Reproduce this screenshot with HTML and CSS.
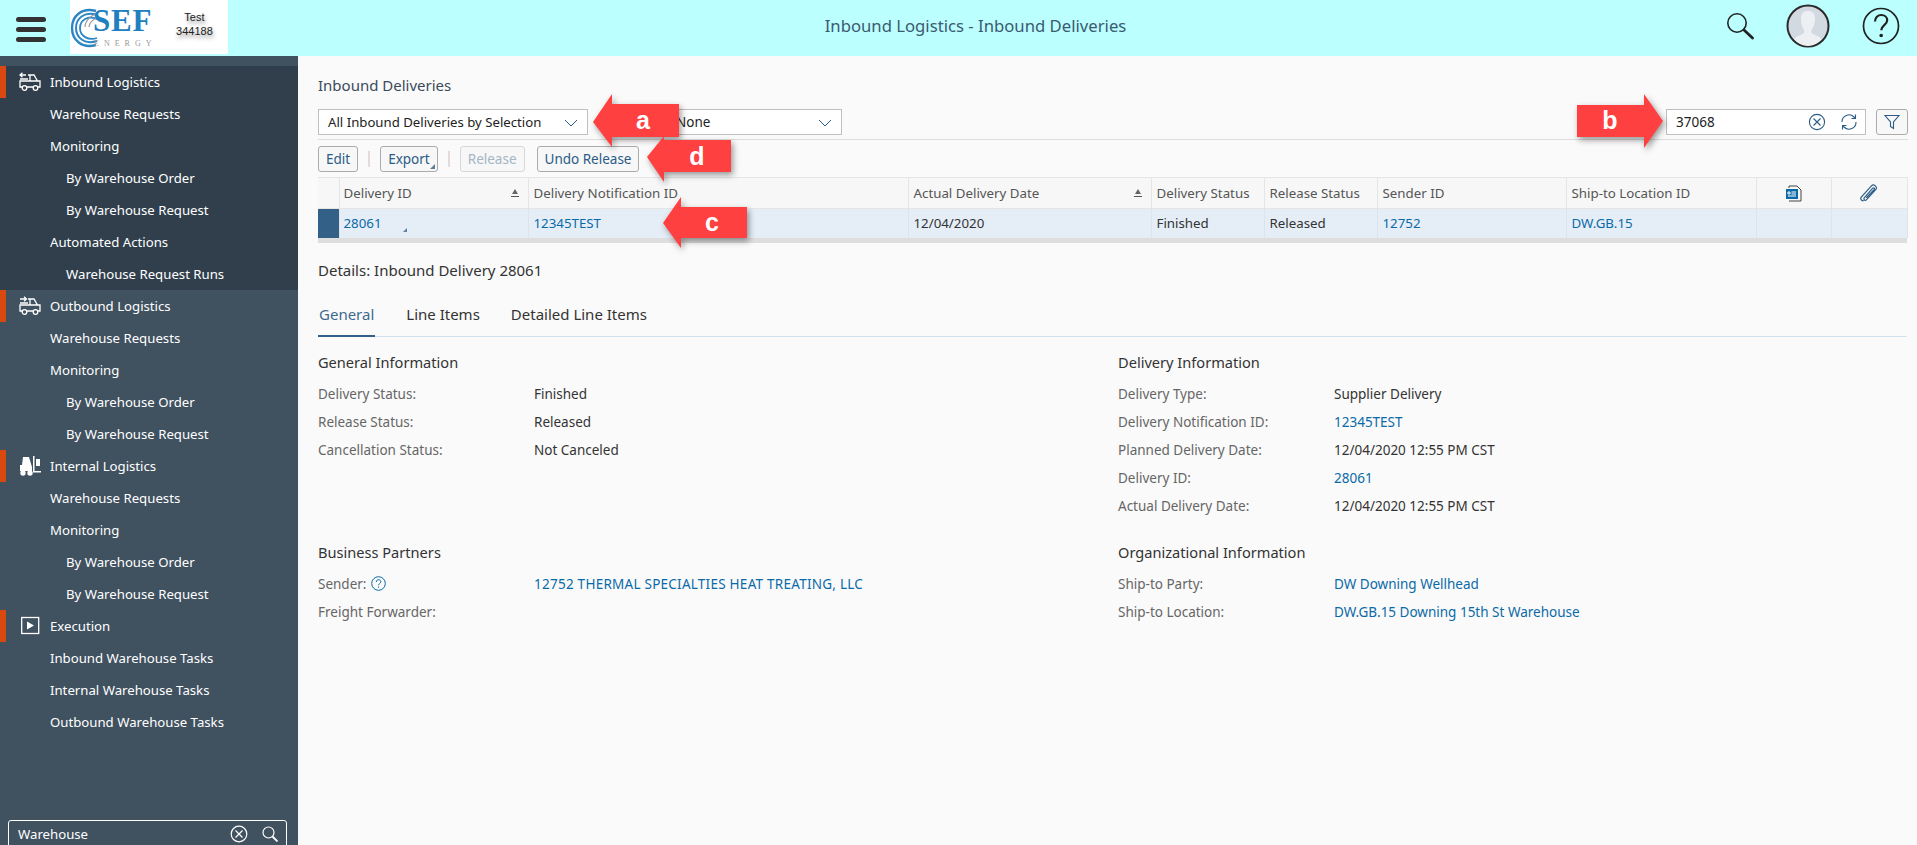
FILE: index.html
```html
<!DOCTYPE html>
<html>
<head>
    <title>Inbound Logistics - Inbound Deliveries</title>
    <link rel="stylesheet" href="styles.css">
</head>
<body>
    <header class="top-bar">
        <div class="hamburger"><span></span><span></span><span></span></div>
        <div class="brand">
            <svg class="swirl" width="30" height="42" viewBox="0 0 30 42" fill="none" stroke="#2a86c4">
                <path d="M26 4C12 0 2 9 2 21s10 21 24 17" stroke-width="2.4"/>
                <path d="M27 8C15 4 6 11 6 21s9 17 21 13" stroke-width="2"/>
                <path d="M27 12C18 8 10 13 10 21s8 13 17 10" stroke-width="1.8"/>
                <path d="M28 6C22 8 15 13 15 20" stroke="#999" stroke-width="1.2"/>
                <path d="M28 10C24 12 19 15 19 20" stroke="#999" stroke-width="1.2"/>
            </svg>
            <div class="brand-name">
                <span class="brand-sef">SEF</span>
                <span class="brand-energy">ENERGY</span>
            </div>
            <div class="brand-user">Test<br>344188</div>
        </div>
        <div class="page-title">Inbound Logistics - Inbound Deliveries</div>
        <div class="top-icons">
            <svg width="28" height="28" viewBox="0 0 28 28" fill="none" stroke="#222">
                <circle cx="11" cy="11" r="9.2" stroke-width="1.6"/>
                <path d="M18 18l8.5 8" stroke-width="2.8" stroke-linecap="round"/>
            </svg>
            <svg width="44" height="44" viewBox="0 0 44 44">
                <circle cx="22" cy="22" r="20.5" fill="#d3d9e0" stroke="#2b2b2b" stroke-width="2"/>
                <path d="M15 15c0-6 3-8 7-8s7 2 7 8c0 5-2 9-3.500 11v3c2 2 8 3 10 6-3 4-8 7-13.500 7S11 39 8 35c2-3 8-4 10-6v-3c-1.500-2-3-6-3-11z" fill="#edf0f3"/>
            </svg>
            <svg width="38" height="38" viewBox="0 0 38 38" fill="none" stroke="#222">
                <circle cx="19" cy="19" r="17.500" stroke-width="1.700"/>
                <path d="M13 14.500c0-4 3-6.500 6.200-6.500 3.500 0 6 2.300 6 5.300 0 4.700-6 5-6 10" stroke-width="2.200"/>
                <circle cx="19.200" cy="28.500" r="1.800" fill="#222" stroke="none"/>
            </svg>
        </div>
    </header>

    <div class="app-body">
        <nav class="sidebar">
            <div class="nav-group nav-group-active">
                <a class="nav-item nav-head">
                    <svg class="nav-icon" viewBox="0 0 22 20" fill="none" stroke="#fff" stroke-width="1.300">
                        <path d="M7 3H1.500m2-2.200L1 3l2.500 2.200M1 7h8"/>
                        <path d="M9 3h6l3.500 6H21v6h-2M4 15H1V9h10V3m0 6h7M8 15h6"/>
                        <circle cx="5.500" cy="16" r="2.300"/><circle cx="16.500" cy="16" r="2.300"/>
                    </svg>
                    Inbound Logistics
                </a>
                <a class="nav-item">Warehouse Requests</a>
                <a class="nav-item">Monitoring</a>
                <a class="nav-item nav-sub">By Warehouse Order</a>
                <a class="nav-item nav-sub">By Warehouse Request</a>
                <a class="nav-item">Automated Actions</a>
                <a class="nav-item nav-sub">Warehouse Request Runs</a>
            </div>
            <div class="nav-group">
                <a class="nav-item nav-head">
                    <svg class="nav-icon" viewBox="0 0 22 20" fill="none" stroke="#fff" stroke-width="1.300">
                        <path d="M1 3h6m-2-2.200L7.500 3 5 5.200M1 7h8"/>
                        <path d="M9 3h6l3.500 6H21v6h-2M4 15H1V9h10V3m0 6h7M8 15h6"/>
                        <circle cx="5.500" cy="16" r="2.300"/><circle cx="16.500" cy="16" r="2.300"/>
                    </svg>
                    Outbound Logistics
                </a>
                <a class="nav-item">Warehouse Requests</a>
                <a class="nav-item">Monitoring</a>
                <a class="nav-item nav-sub">By Warehouse Order</a>
                <a class="nav-item nav-sub">By Warehouse Request</a>
            </div>
            <div class="nav-group">
                <a class="nav-item nav-head">
                    <svg class="nav-icon" viewBox="0 0 22 20" fill="#fff">
                        <path d="M4 1h6l3 10v4H1V9h2z"/>
                        <path d="M14 0h1.500v15H22v1.500h-8z"/>
                        <rect x="17" y="3" width="4" height="7"/>
                        <circle cx="4" cy="17" r="2.700"/><circle cx="11" cy="17" r="2.700"/>
                    </svg>
                    Internal Logistics
                </a>
                <a class="nav-item">Warehouse Requests</a>
                <a class="nav-item">Monitoring</a>
                <a class="nav-item nav-sub">By Warehouse Order</a>
                <a class="nav-item nav-sub">By Warehouse Request</a>
            </div>
            <div class="nav-group">
                <a class="nav-item nav-head">
                    <svg class="nav-icon" viewBox="0 0 22 20" fill="none" stroke="#fff" stroke-width="1.300">
                        <rect x="2.700" y="1.500" width="17" height="16"/>
                        <path d="M8 5.500l7 4-7 4z" fill="#fff" stroke="none"/>
                    </svg>
                    Execution
                </a>
                <a class="nav-item">Inbound Warehouse Tasks</a>
                <a class="nav-item">Internal Warehouse Tasks</a>
                <a class="nav-item">Outbound Warehouse Tasks</a>
            </div>
            <div class="nav-search">
                <span class="nav-search-text">Warehouse</span>
                <svg width="18" height="18" viewBox="0 0 18 18" fill="none" stroke="#fff" stroke-width="1.200">
                    <circle cx="9" cy="9" r="7.800"/><path d="M5.500 5.500l7 7m0-7l-7 7"/>
                </svg>
                <svg width="16" height="16" viewBox="0 0 16 16" fill="none" stroke="#fff" stroke-width="1.200">
                    <circle cx="6.500" cy="6.500" r="5.500"/><path d="M10.500 10.500l5 5" stroke-width="1.800"/>
                </svg>
            </div>
        </nav>

        <main class="content">
            <h1 class="page-head">Inbound Deliveries</h1>
            <div class="filter-bar">
                <div class="select select-query">All Inbound Deliveries by Selection
                    <svg class="chevron" viewBox="0 0 14 8"><path d="M1 1l6 6 6-6"/></svg>
                </div>
                <div class="select select-group"><span>None</span>
                    <svg class="chevron" viewBox="0 0 14 8"><path d="M1 1l6 6 6-6"/></svg>
                </div>
                <div class="search-box">
                    <span class="search-value">37068</span>
                    <svg width="18" height="18" viewBox="0 0 18 18" fill="none" stroke="#2a5c86" stroke-width="1.100">
                        <circle cx="9" cy="9" r="7.600"/><path d="M5.500 5.500l7 7m0-7l-7 7"/>
                    </svg>
                    <svg width="18" height="18" viewBox="0 0 18 18" fill="none" stroke="#2a5c86" stroke-width="1.100">
                        <path d="M2 9a7 7 0 0 1 12-5l1.500 1.500M16 9a7 7 0 0 1-12 5l-1.500-1.500"/>
                        <path d="M15.500 1.500v4h-4M2.500 16.500v-4h4"/>
                    </svg>
                </div>
                <button class="btn btn-icon">
                    <svg width="16" height="16" viewBox="0 0 16 16" fill="none" stroke="#2a5c86" stroke-width="1.100">
                        <path d="M1 1.500h14L9.500 8v6.500l-3-2V8z"/>
                    </svg>
                </button>
            </div>
            <div class="toolbar">
                <button class="btn">Edit</button>
                <span class="tool-sep"></span>
                <button class="btn btn-menu">Export</button>
                <span class="tool-sep"></span>
                <button class="btn btn-disabled">Release</button>
                <button class="btn">Undo Release</button>
            </div>

            <table class="grid">
                <colgroup>
                    <col class="c-sel"><col class="c-id"><col class="c-note"><col class="c-date"><col class="c-status">
                    <col class="c-status"><col class="c-sender"><col class="c-loc"><col class="c-ico"><col class="c-ico">
                </colgroup>
                <thead>
                    <tr>
                        <th></th>
                        <th><span class="th-sort">Delivery ID<i class="sort-mark"></i></span></th>
                        <th>Delivery Notification ID</th>
                        <th><span class="th-sort">Actual Delivery Date<i class="sort-mark"></i></span></th>
                        <th>Delivery Status</th>
                        <th>Release Status</th>
                        <th>Sender ID</th>
                        <th>Ship-to Location ID</th>
                        <th class="ico-cell">
                            <svg width="17" height="17" viewBox="0 0 17 17" fill="none">
                                <path d="M4 3V1h8l4 4v11H4" stroke="#444"/>
                                <rect x="1" y="4" width="12" height="10" fill="#0a6aa8"/>
                                <path d="M3 7h2v2H3zM6.500 7H11M3 11h8M6.500 9H11" stroke="#fff"/>
                            </svg>
                        </th>
                        <th class="ico-cell">
                            <svg width="18" height="18" viewBox="0 0 17 17" fill="none" stroke="#2a5c86" stroke-width="1.100">
                                <path d="M4 15.500c-2 1-4-1-3-3L11 1.500c2-2 6 1.500 4 3.500L6 15c-1 1-3-.5-2-2l8-9c1-1 2 0 1.500 1L6 13"/>
                            </svg>
                        </th>
                    </tr>
                </thead>
                <tbody>
                    <tr>
                        <td class="sel-cell"></td>
                        <td class="id-cell"><a>28061</a><i class="menu-mark"></i></td>
                        <td><a>12345TEST</a></td>
                        <td>12/04/2020</td>
                        <td>Finished</td>
                        <td>Released</td>
                        <td><a>12752</a></td>
                        <td><a>DW.GB.15</a></td>
                        <td></td>
                        <td></td>
                    </tr>
                </tbody>
            </table>
            <div class="grid-scroll"></div>

            <h2 class="details-head">Details: Inbound Delivery 28061</h2>
            <div class="tabs">
                <span class="tab tab-on">General</span>
                <span class="tab">Line Items</span>
                <span class="tab">Detailed Line Items</span>
            </div>

            <div class="form-cols">
                <div>
                    <section class="form-sec">
                        <h3>General Information</h3>
                        <div class="field"><label>Delivery Status:</label><span>Finished</span></div>
                        <div class="field"><label>Release Status:</label><span>Released</span></div>
                        <div class="field"><label>Cancellation Status:</label><span>Not Canceled</span></div>
                    </section>
                    <section class="form-sec">
                        <h3>Business Partners</h3>
                        <div class="field">
                            <label>Sender:
                                <svg class="help" width="15" height="15" viewBox="0 0 15 15" fill="none" stroke="#0a6aa8">
                                    <circle cx="7.500" cy="7.500" r="6.800"/>
                                    <path d="M5.300 6c0-1.500 1-2.300 2.300-2.300S9.800 4.500 9.800 5.700c0 1.700-2.200 1.800-2.200 3.600M7.600 10.500v1.300"/>
                                </svg>
                            </label>
                            <a class="caps-link">12752 THERMAL SPECIALTIES HEAT TREATING, LLC</a>
                        </div>
                        <div class="field"><label>Freight Forwarder:</label></div>
                    </section>
                </div>
                <div>
                    <section class="form-sec">
                        <h3>Delivery Information</h3>
                        <div class="field"><label>Delivery Type:</label><span>Supplier Delivery</span></div>
                        <div class="field"><label>Delivery Notification ID:</label><a>12345TEST</a></div>
                        <div class="field"><label>Planned Delivery Date:</label><span>12/04/2020 12:55 PM CST</span></div>
                        <div class="field"><label>Delivery ID:</label><a>28061</a></div>
                        <div class="field"><label>Actual Delivery Date:</label><span>12/04/2020 12:55 PM CST</span></div>
                    </section>
                    <section class="form-sec">
                        <h3>Organizational Information</h3>
                        <div class="field"><label>Ship-to Party:</label><a>DW Downing Wellhead</a></div>
                        <div class="field"><label>Ship-to Location:</label><a>DW.GB.15 Downing 15th St Warehouse</a></div>
                    </section>
                </div>
            </div>
        </main>
    </div>

    <!-- callouts drawn on top of the screenshot -->
    <div class="callout callout-a">
        <svg width="86" height="53" viewBox="0 0 86 53"><polygon points="0,28 19,0 19,10 86,10 86,43 19,43 19,53"/></svg>
        <span>a</span>
    </div>
    <div class="callout callout-d">
        <svg width="84" height="46" viewBox="0 0 84 46"><polygon points="0,21 17,0 17,4 84,4 84,36 17,36 17,46"/></svg>
        <span>d</span>
    </div>
    <div class="callout callout-c">
        <svg width="84" height="51" viewBox="0 0 84 51"><polygon points="0,26 18,0 18,10 84,10 84,41 18,41 18,51"/></svg>
        <span>c</span>
    </div>
    <div class="callout callout-b">
        <svg width="86" height="54" viewBox="0 0 86 54"><polygon points="0,11 67,11 67,0 86,27 67,54 67,43 0,43"/></svg>
        <span>b</span>
    </div>
</body>
</html>
```

FILE: styles.css
```css
*, *::before, *::after { padding: 0; margin: 0; box-sizing: border-box; }
html, body { height: 845px; overflow: hidden; }
body { font-family: "Noto Sans", sans-serif; font-size: 13.5px; color: #333; background: #fafafa; }
a { color: #0a6aa8; text-decoration: none; }

/* top bar */
.top-bar { display: flex; align-items: flex-start; height: 56px; background: #bbffff; }
.hamburger { width: 70px; padding: 17px 0 0 16px; display: flex; flex-direction: column; gap: 5px; }
.hamburger span { display: block; width: 30px; height: 5px; border-radius: 3px; background: #333; }
.brand { position: relative; display: flex; width: 158px; height: 54px; background: #fff; padding: 7px 0 0 0; }
.brand-name { display: flex; flex-direction: column; font-family: "Liberation Serif", serif; margin-left: -7px; }
.brand-sef { font-size: 31px; font-weight: bold; line-height: 28px; color: #1f80bf; letter-spacing: .8px; }
.brand-energy { margin-top: 4px; font-size: 8px; line-height: 10px; letter-spacing: 5px; color: #999; padding-left: 1px; }
.brand-user { margin-left: 13px; padding-top: 3px; width: 50px; text-align: center; font-family: "Liberation Sans", sans-serif; font-size: 11px; line-height: 14px; color: #222; text-shadow: 1px 3px 4px rgba(0, 0, 0, .45); }
.page-title { flex: 1; text-align: center; line-height: 52px; font-size: 16.700px; color: #3c5a70; padding-right: 3px; }
.top-icons { display: flex; align-items: center; gap: 32px; height: 52px; padding-right: 17px; }

/* layout */
.app-body { display: flex; height: 789px; }

/* left nav */
.sidebar { display: flex; flex-direction: column; width: 298px; flex: none; padding-top: 10px; background: #405160; overflow: hidden; font-size: 13.200px; }
.nav-group-active { background: #313f4d; }
.nav-item { display: flex; align-items: center; height: 32px; padding-left: 50px; color: #fff; white-space: nowrap; }
.nav-sub { padding-left: 66px; }
.nav-head { position: relative; }
.nav-head::before { content: ""; position: absolute; left: 0; top: 0; bottom: 0; width: 6px; background: #d9480f; }
.nav-icon { position: absolute; left: 19px; top: 6px; width: 22px; height: 20px; }
.nav-search { display: flex; align-items: center; gap: 14px; flex: none; margin: auto 0 -5px 8px; width: 279px; height: 30px; padding: 0 8px 2px 9px; border: 1px solid #fff; border-radius: 3px; color: #fff; }
.nav-search-text { flex: 1; }

/* content */
.content { flex: 1; padding: 16px 9px 0 20px; min-width: 0; }
.page-head { font-size: 15px; font-weight: normal; line-height: 26px; color: #3b4a5a; }
.filter-bar { display: flex; align-items: center; margin-top: 11px; padding-bottom: 5px; height: 31px; border-bottom: 1px solid #ddd; }
.select { position: relative; height: 26px; line-height: 24px; background: #fff; border: 1px solid #bfbfbf; padding-left: 9px; color: #222; }
.select-query { width: 270px; font-size: 13.200px; }
.select-group { width: 177px; margin-left: 77px; }
.select-group span { padding-left: 1px; }
.chevron { position: absolute; right: 9px; top: 9px; width: 14px; height: 8px; fill: none; stroke: #2a5c86; stroke-width: 1; }
.search-box { display: flex; align-items: center; gap: 14px; width: 200px; height: 26px; margin-left: auto; padding: 0 7px 0 9px; background: #fff; border: 1px solid #bfbfbf; color: #222; }
.search-value { flex: 1; }
.btn { height: 26px; padding: 0 7px; background: #f7f7f7; border: 1px solid #ababab; border-radius: 3px; font: inherit; color: #2a5c86; white-space: nowrap; }
.btn-icon { display: flex; align-items: center; justify-content: center; width: 32px; margin-left: 10px; }
.btn-disabled { color: #a4b5c5; border-color: #d8d8d8; margin-right: 12px; }
.btn-menu { position: relative; }
.btn-menu::after { content: ""; position: absolute; right: 2px; bottom: 2px; border-left: 5px solid transparent; border-bottom: 5px solid #5f7f9a; }
.toolbar { display: flex; align-items: center; height: 37px; padding-top: 1px; }
.tool-sep { width: 2px; height: 16px; margin: 0 10px; background: #e3dcd8; }

/* table */
.grid { width: 1589px; border-collapse: collapse; table-layout: fixed; font-size: 13.300px; }
.c-sel { width: 21px; }
.c-id { width: 189px; }
.c-note { width: 380px; }
.c-date { width: 243px; }
.c-status { width: 113px; }
.c-sender { width: 189px; }
.c-loc { width: 190px; }
.c-ico { width: 75.500px; }
.grid th { height: 31px; padding: 0 5px; background: #f7f7f7; border: 1px solid #e5e5e5; border-left: 0; font-weight: normal; text-align: left; color: #555; white-space: nowrap; }
.grid td { height: 29px; padding: 0 5px; background: #e5eef7; border-right: 1px solid #dde3e9; white-space: nowrap; }
.grid th:first-child + th, .grid td:first-child + td { padding-left: 4px; }
.th-sort { display: flex; align-items: center; justify-content: space-between; padding-right: 4px; }
.sort-mark { width: 8px; height: 8px; background: linear-gradient(#555, #555) bottom/8px 1px no-repeat; position: relative; }
.sort-mark::before { content: ""; position: absolute; left: 1px; top: 0; border-left: 3px solid transparent; border-right: 3px solid transparent; border-bottom: 5px solid #666; }
.ico-cell { text-align: center !important; }
.ico-cell svg { display: block; margin: 0 auto; }
.grid td.sel-cell { padding: 0; background: #336087; }
.id-cell { position: relative; }
.menu-mark { position: absolute; left: 63px; bottom: 6px; border-left: 4px solid transparent; border-bottom: 4px solid #5f7f9a; }
.grid-scroll { width: 1589px; height: 5px; background: #dedede; }

/* details */
.details-head { margin-top: 18px; font-size: 15px; font-weight: normal; line-height: 18px; color: #333; }
.tabs { display: flex; height: 58px; padding-top: 23px; border-bottom: 1px solid #cfe0ee; width: 1589px; }
.tab { height: 35px; line-height: 24px; margin-right: 31px; font-size: 15px; color: #333; }
.tab-on { color: #3d6a90; border-bottom: 2px solid #336087; padding: 0 1px; }
.form-cols { display: grid; grid-template-columns: 800px 1fr; padding-top: 13px; }
.form-sec { margin-bottom: 15px; min-height: 175px; }
.form-sec h3 { font-size: 14.600px; font-weight: normal; line-height: 24px; margin-bottom: 6px; color: #333; }
.form-sec + .form-sec { min-height: 0; }
.field { display: flex; align-items: center; height: 28px; }
.field label { display: flex; align-items: center; gap: 5px; width: 216px; flex: none; color: #666; }
.caps-link { letter-spacing: .25px; }

/* red arrows */
.callout { position: absolute; }
.callout svg { display: block; fill: #ff4040; filter: drop-shadow(2px 3px 3px rgba(0, 0, 0, .4)); }
.callout span { position: absolute; width: 40px; margin-left: -20px; text-align: center; font-family: "Liberation Sans", sans-serif; font-size: 25px; font-weight: bold; line-height: 30px; color: #fff; }
.callout-a { left: 593px; top: 94px; }
.callout-a span { left: 50px; top: 11px; }
.callout-d { left: 647px; top: 136px; }
.callout-d span { left: 50px; top: 5px; }
.callout-c { left: 663px; top: 197px; }
.callout-c span { left: 49px; top: 10px; }
.callout-b { left: 1577px; top: 94px; }
.callout-b span { left: 33px; top: 11px; }
```
